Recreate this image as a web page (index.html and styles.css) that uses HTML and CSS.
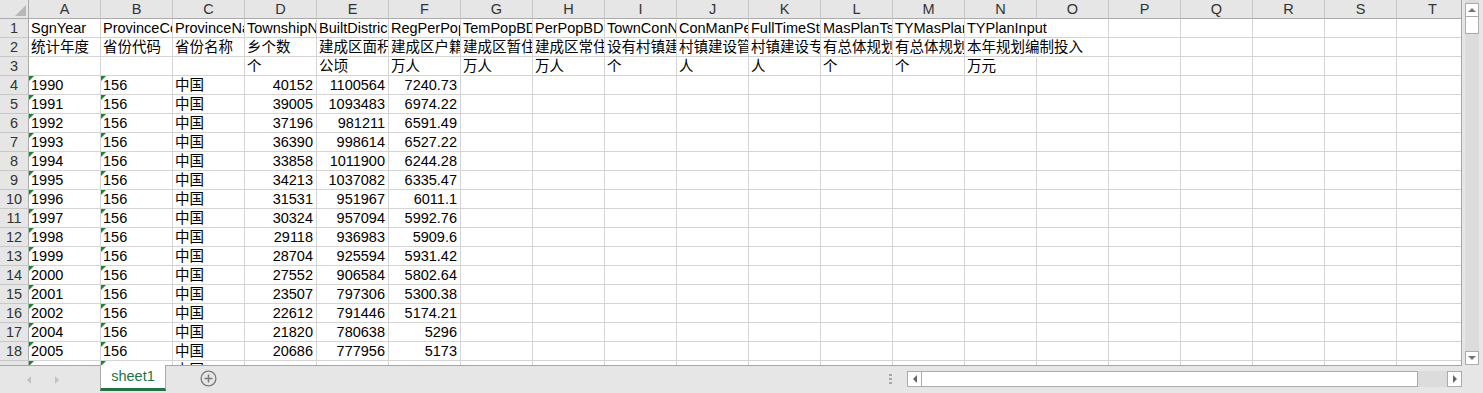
FILE: index.html
```html
<!DOCTYPE html>
<html lang="zh">
<head>
<meta charset="utf-8">
<title>sheet1</title>
<link rel="stylesheet" href="styles.css">
</head>
<body>
<div class="main">
  <div class="sheet">
    <div class="grid">
      <div class="corner"><span class="tri"></span></div>
      <div class="h">A</div><div class="h">B</div><div class="h">C</div><div class="h">D</div><div class="h">E</div><div class="h">F</div><div class="h">G</div><div class="h">H</div><div class="h">I</div><div class="h">J</div><div class="h">K</div><div class="h">L</div><div class="h">M</div><div class="h">N</div><div class="h">O</div><div class="h">P</div><div class="h">Q</div><div class="h">R</div><div class="h">S</div><div class="h">T</div>

      <div class="r">1</div>
      <div class="c">SgnYear</div><div class="c">ProvinceCode</div><div class="c">ProvinceName</div><div class="c">TownshipNum</div><div class="c">BuiltDistrictArea</div><div class="c">RegPerPopBD</div><div class="c">TemPopBD</div><div class="c">PerPopBD</div><div class="c">TownConNum</div><div class="c">ConManPer</div><div class="c">FullTimeStaff</div><div class="c">MasPlanTsNum</div><div class="c">TYMasPlanNum</div><div class="c spill">TYPlanInput</div><div class="c"></div><div class="c"></div><div class="c"></div><div class="c"></div><div class="c"></div><div class="c"></div>

      <div class="r">2</div>
      <div class="c">统计年度</div><div class="c">省份代码</div><div class="c">省份名称</div><div class="c">乡个数</div><div class="c">建成区面积</div><div class="c">建成区户籍人口</div><div class="c">建成区暂住人口</div><div class="c">建成区常住人口</div><div class="c">设有村镇建设管理机构的个数</div><div class="c">村镇建设管理人员</div><div class="c">村镇建设专职人员</div><div class="c">有总体规划的镇个数</div><div class="c">有总体规划的乡个数</div><div class="c spill">本年规划编制投入</div><div class="c"></div><div class="c"></div><div class="c"></div><div class="c"></div><div class="c"></div><div class="c"></div>

      <div class="r">3</div>
      <div class="c"></div><div class="c"></div><div class="c"></div><div class="c">个</div><div class="c">公顷</div><div class="c">万人</div><div class="c">万人</div><div class="c">万人</div><div class="c">个</div><div class="c">人</div><div class="c">人</div><div class="c">个</div><div class="c">个</div><div class="c">万元</div><div class="c"></div><div class="c"></div><div class="c"></div><div class="c"></div><div class="c"></div><div class="c"></div>

      <div class="r">4</div>
      <div class="c t">1990</div><div class="c t">156</div><div class="c">中国</div><div class="c n">40152</div><div class="c n">1100564</div><div class="c n">7240.73</div><div class="c"></div><div class="c"></div><div class="c"></div><div class="c"></div><div class="c"></div><div class="c"></div><div class="c"></div><div class="c"></div><div class="c"></div><div class="c"></div><div class="c"></div><div class="c"></div><div class="c"></div><div class="c"></div>

      <div class="r">5</div>
      <div class="c t">1991</div><div class="c t">156</div><div class="c">中国</div><div class="c n">39005</div><div class="c n">1093483</div><div class="c n">6974.22</div><div class="c"></div><div class="c"></div><div class="c"></div><div class="c"></div><div class="c"></div><div class="c"></div><div class="c"></div><div class="c"></div><div class="c"></div><div class="c"></div><div class="c"></div><div class="c"></div><div class="c"></div><div class="c"></div>

      <div class="r">6</div>
      <div class="c t">1992</div><div class="c t">156</div><div class="c">中国</div><div class="c n">37196</div><div class="c n">981211</div><div class="c n">6591.49</div><div class="c"></div><div class="c"></div><div class="c"></div><div class="c"></div><div class="c"></div><div class="c"></div><div class="c"></div><div class="c"></div><div class="c"></div><div class="c"></div><div class="c"></div><div class="c"></div><div class="c"></div><div class="c"></div>

      <div class="r">7</div>
      <div class="c t">1993</div><div class="c t">156</div><div class="c">中国</div><div class="c n">36390</div><div class="c n">998614</div><div class="c n">6527.22</div><div class="c"></div><div class="c"></div><div class="c"></div><div class="c"></div><div class="c"></div><div class="c"></div><div class="c"></div><div class="c"></div><div class="c"></div><div class="c"></div><div class="c"></div><div class="c"></div><div class="c"></div><div class="c"></div>

      <div class="r">8</div>
      <div class="c t">1994</div><div class="c t">156</div><div class="c">中国</div><div class="c n">33858</div><div class="c n">1011900</div><div class="c n">6244.28</div><div class="c"></div><div class="c"></div><div class="c"></div><div class="c"></div><div class="c"></div><div class="c"></div><div class="c"></div><div class="c"></div><div class="c"></div><div class="c"></div><div class="c"></div><div class="c"></div><div class="c"></div><div class="c"></div>

      <div class="r">9</div>
      <div class="c t">1995</div><div class="c t">156</div><div class="c">中国</div><div class="c n">34213</div><div class="c n">1037082</div><div class="c n">6335.47</div><div class="c"></div><div class="c"></div><div class="c"></div><div class="c"></div><div class="c"></div><div class="c"></div><div class="c"></div><div class="c"></div><div class="c"></div><div class="c"></div><div class="c"></div><div class="c"></div><div class="c"></div><div class="c"></div>

      <div class="r">10</div>
      <div class="c t">1996</div><div class="c t">156</div><div class="c">中国</div><div class="c n">31531</div><div class="c n">951967</div><div class="c n">6011.1</div><div class="c"></div><div class="c"></div><div class="c"></div><div class="c"></div><div class="c"></div><div class="c"></div><div class="c"></div><div class="c"></div><div class="c"></div><div class="c"></div><div class="c"></div><div class="c"></div><div class="c"></div><div class="c"></div>

      <div class="r">11</div>
      <div class="c t">1997</div><div class="c t">156</div><div class="c">中国</div><div class="c n">30324</div><div class="c n">957094</div><div class="c n">5992.76</div><div class="c"></div><div class="c"></div><div class="c"></div><div class="c"></div><div class="c"></div><div class="c"></div><div class="c"></div><div class="c"></div><div class="c"></div><div class="c"></div><div class="c"></div><div class="c"></div><div class="c"></div><div class="c"></div>

      <div class="r">12</div>
      <div class="c t">1998</div><div class="c t">156</div><div class="c">中国</div><div class="c n">29118</div><div class="c n">936983</div><div class="c n">5909.6</div><div class="c"></div><div class="c"></div><div class="c"></div><div class="c"></div><div class="c"></div><div class="c"></div><div class="c"></div><div class="c"></div><div class="c"></div><div class="c"></div><div class="c"></div><div class="c"></div><div class="c"></div><div class="c"></div>

      <div class="r">13</div>
      <div class="c t">1999</div><div class="c t">156</div><div class="c">中国</div><div class="c n">28704</div><div class="c n">925594</div><div class="c n">5931.42</div><div class="c"></div><div class="c"></div><div class="c"></div><div class="c"></div><div class="c"></div><div class="c"></div><div class="c"></div><div class="c"></div><div class="c"></div><div class="c"></div><div class="c"></div><div class="c"></div><div class="c"></div><div class="c"></div>

      <div class="r">14</div>
      <div class="c t">2000</div><div class="c t">156</div><div class="c">中国</div><div class="c n">27552</div><div class="c n">906584</div><div class="c n">5802.64</div><div class="c"></div><div class="c"></div><div class="c"></div><div class="c"></div><div class="c"></div><div class="c"></div><div class="c"></div><div class="c"></div><div class="c"></div><div class="c"></div><div class="c"></div><div class="c"></div><div class="c"></div><div class="c"></div>

      <div class="r">15</div>
      <div class="c t">2001</div><div class="c t">156</div><div class="c">中国</div><div class="c n">23507</div><div class="c n">797306</div><div class="c n">5300.38</div><div class="c"></div><div class="c"></div><div class="c"></div><div class="c"></div><div class="c"></div><div class="c"></div><div class="c"></div><div class="c"></div><div class="c"></div><div class="c"></div><div class="c"></div><div class="c"></div><div class="c"></div><div class="c"></div>

      <div class="r">16</div>
      <div class="c t">2002</div><div class="c t">156</div><div class="c">中国</div><div class="c n">22612</div><div class="c n">791446</div><div class="c n">5174.21</div><div class="c"></div><div class="c"></div><div class="c"></div><div class="c"></div><div class="c"></div><div class="c"></div><div class="c"></div><div class="c"></div><div class="c"></div><div class="c"></div><div class="c"></div><div class="c"></div><div class="c"></div><div class="c"></div>

      <div class="r">17</div>
      <div class="c t">2004</div><div class="c t">156</div><div class="c">中国</div><div class="c n">21820</div><div class="c n">780638</div><div class="c n">5296</div><div class="c"></div><div class="c"></div><div class="c"></div><div class="c"></div><div class="c"></div><div class="c"></div><div class="c"></div><div class="c"></div><div class="c"></div><div class="c"></div><div class="c"></div><div class="c"></div><div class="c"></div><div class="c"></div>

      <div class="r">18</div>
      <div class="c t">2005</div><div class="c t">156</div><div class="c">中国</div><div class="c n">20686</div><div class="c n">777956</div><div class="c n">5173</div><div class="c"></div><div class="c"></div><div class="c"></div><div class="c"></div><div class="c"></div><div class="c"></div><div class="c"></div><div class="c"></div><div class="c"></div><div class="c"></div><div class="c"></div><div class="c"></div><div class="c"></div><div class="c"></div>

      <div class="r">19</div>
      <div class="c t"></div><div class="c t"></div><div class="c">中国</div><div class="c n"></div><div class="c n"></div><div class="c n"></div><div class="c"></div><div class="c"></div><div class="c"></div><div class="c"></div><div class="c"></div><div class="c"></div><div class="c"></div><div class="c"></div><div class="c"></div><div class="c"></div><div class="c"></div><div class="c"></div><div class="c"></div><div class="c"></div>
    </div>
  </div>
  <div class="vscroll">
    <div class="vtrack">
      <div class="sbtn"><span class="ar up"></span></div>
      <div class="vthumb"></div>
      <div class="vfill"></div>
      <div class="sbtn"><span class="ar down"></span></div>
    </div>
  </div>
</div>
<div class="tabs">
  <div class="nav"><span class="nl"></span><span class="nr"></span></div>
  <div class="tab">sheet1</div>
  <div class="add">
    <svg width="17" height="17" viewBox="0 0 17 17"><circle cx="8.5" cy="8.5" r="7.4" fill="none" stroke="#7a7a7a" stroke-width="1.3"/><path d="M8.5 4.5v8M4.5 8.5h8" stroke="#7a7a7a" stroke-width="1.5"/></svg>
  </div>
  <div class="spacer"></div>
  <div class="dots"><i></i><i></i><i></i></div>
  <div class="hscroll">
    <div class="hbtn"><span class="ar left"></span></div>
    <div class="hthumb"></div>
    <div class="htrack"></div>
    <div class="hbtn"><span class="ar right"></span></div>
  </div>
  <div class="rgap"></div>
</div>
</body>
</html>
```

FILE: styles.css
```css
* { box-sizing: border-box; }
body {
  margin: 0;
  width: 1483px;
  height: 393px;
  overflow: hidden;
  background: #e6e6e6;
  font-family: "Liberation Sans", "Noto Sans CJK SC", sans-serif;
  font-size: 14.5px;
  color: #000;
}
.main { display: flex; height: 366px; }
.sheet {
  width: 1462px;
  height: 366px;
  overflow: hidden;
  background: #fff;
  border-right: 1px solid #a6a6a6;
  border-bottom: 1px solid #a6a6a6;
}
.grid {
  display: grid;
  grid-template-columns: 29px repeat(20, 72px);
  grid-auto-rows: 19px;
}
.corner {
  background: #e6e6e6;
  border-right: 1px solid #ababab;
  border-bottom: 1px solid #ababab;
  display: flex;
  justify-content: flex-end;
  align-items: flex-end;
  padding: 0 2px 2px 0;
}
.tri {
  width: 0; height: 0;
  border-left: 11px solid transparent;
  border-bottom: 11px solid #b8b8b8;
}
.h {
  background: #e6e6e6;
  border-right: 1px solid #c8c8c8;
  border-bottom: 1px solid #ababab;
  text-align: center;
  line-height: 19px;
  color: #333;
}
.r {
  background: #e6e6e6;
  border-right: 1px solid #ababab;
  border-bottom: 1px solid #c8c8c8;
  text-align: center;
  line-height: 19px;
  color: #333;
}
.c {
  position: relative;
  border-right: 1px solid #d4d4d4;
  border-bottom: 1px solid #d4d4d4;
  padding: 0 2px;
  overflow: hidden;
  white-space: nowrap;
  line-height: 19px;
}
.n { text-align: right; padding-right: 3px; }
.t::before {
  content: "";
  position: absolute;
  left: 0; top: 0;
  width: 0; height: 0;
  border-top: 5px solid #188a2e;
  border-right: 5px solid transparent;
}
.spill { overflow: visible; border-right-color: transparent; }

.vscroll { width: 21px; height: 366px; padding-left: 3px; padding-right: 4px; }
.vtrack {
  height: 365px;
  background: #dcdcdc;
  display: flex;
  flex-direction: column;
  padding-top: 3px;
}
.sbtn {
  height: 14px;
  background: #fff;
  border: 1px solid #ababab;
  display: flex;
  align-items: center;
  justify-content: center;
}
.vthumb { height: 17px; background: #fff; border: 1px solid #ababab; border-top: 0; }
.vfill { flex: 1; }
.ar { width: 0; height: 0; }
.ar.up { border-left: 4px solid transparent; border-right: 4px solid transparent; border-bottom: 4px solid #777; }
.ar.down { border-left: 4px solid transparent; border-right: 4px solid transparent; border-top: 4px solid #777; }
.ar.left { border-top: 4px solid transparent; border-bottom: 4px solid transparent; border-right: 4px solid #666; }
.ar.right { border-top: 4px solid transparent; border-bottom: 4px solid transparent; border-left: 4px solid #666; }

.tabs { display: flex; height: 27px; align-items: flex-start; }
.nav {
  width: 100px;
  height: 27px;
  display: flex;
  align-items: center;
  padding-left: 27px;
  gap: 24px;
}
.nl { width: 0; height: 0; border-top: 4px solid transparent; border-bottom: 4px solid transparent; border-right: 4px solid #c2c2c2; }
.nr { width: 0; height: 0; border-top: 4px solid transparent; border-bottom: 4px solid transparent; border-left: 4px solid #c2c2c2; }
.tab {
  width: 66px;
  height: 26px;
  margin-top: -1px;
  background: #fff;
  border-left: 1px solid #ababab;
  border-right: 1px solid #ababab;
  border-bottom: 3px solid #217346;
  color: #217346;
  text-align: center;
  line-height: 23px;
}
.add { margin-left: 34px; width: 17px; height: 17px; margin-top: 4px; }
.add svg { display: block; }
.spacer { flex: 1; }
.dots { width: 3px; margin-top: 8px; display: flex; flex-direction: column; gap: 2px; margin-right: 15px; }
.dots i { display: block; width: 3px; height: 2px; background: #a6a6a6; }
.hscroll { width: 555px; height: 16px; margin-top: 5px; display: flex; }
.hbtn {
  width: 15px;
  height: 16px;
  background: #fff;
  border: 1px solid #ababab;
  display: flex;
  align-items: center;
  justify-content: center;
}
.hthumb { width: 496px; height: 16px; background: #fff; border: 1px solid #ababab; border-left: 0; }
.htrack { flex: 1; background: #dcdcdc; }
.rgap { width: 21px; }
```
